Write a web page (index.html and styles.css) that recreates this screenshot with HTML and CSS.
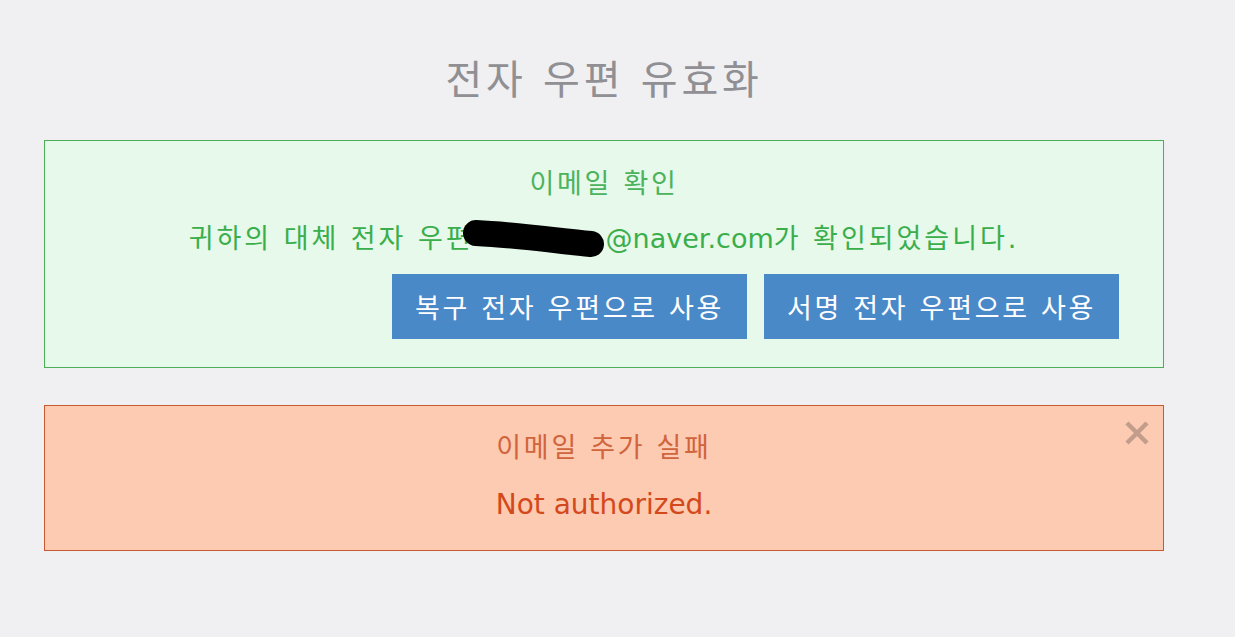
FILE: index.html
```html
<!DOCTYPE html>
<html lang="ko">
<head>
<meta charset="utf-8">
<title>전자 우편 유효화</title>
<link rel="stylesheet" href="styles.css">
</head>
<body>
<main class="page">
  <h1 class="page-title">전자 우편 유효화</h1>
  <section class="alert alert-success">
    <h2 class="alert-title">이메일 확인</h2>
    <p class="alert-text">귀하의 대체 전자 우편<svg class="redact" width="146" height="44" viewBox="0 0 146 44" aria-hidden="true"><path d="M16 17 C 58 19, 98 25, 131 28" fill="none" stroke="#000" stroke-width="26" stroke-linecap="round"/></svg><span class="latin">@naver.com</span>가 확인되었습니다.</p>
    <div class="actions">
      <button class="btn" type="button">복구 전자 우편으로 사용</button>
      <button class="btn" type="button">서명 전자 우편으로 사용</button>
    </div>
  </section>
  <section class="alert alert-error">
    <button class="close" type="button" aria-label="닫기"><svg width="26" height="26" viewBox="0 0 26 26"><path d="M3 3 L23 23 M23 3 L3 23" stroke="currentColor" stroke-width="4.5" stroke-linecap="butt"/></svg></button>
    <h2 class="alert-title">이메일 추가 실패</h2>
    <p class="alert-text latin">Not authorized.</p>
  </section>
</main>
</body>
</html>
```
FILE: styles.css
```css
* { box-sizing: border-box; }
html, body { margin: 0; padding: 0; }
body {
  background: #f0f0f2;
  font-family: "DejaVu Sans", "Noto Sans CJK KR", sans-serif;
  width: 1235px;
  height: 637px;
  overflow: hidden;
}
.page {
  padding: 52px 0 0 44px;
}
.page-title {
  margin: 0 0 32px;
  width: 1120px;
  text-align: center;
  font-size: 40px;
  line-height: 56px;
  font-weight: normal;
  letter-spacing: 0.095em;
  color: #8f8f94;
}
.alert {
  position: relative;
  width: 1120px;
  border: 1px solid;
  text-align: center;
}
.alert-success {
  background: #e6f9ea;
  border-color: #4caf57;
  padding: 25px 0 28px;
}
.alert-error {
  margin-top: 37px;
  background: #fdcab2;
  border-color: #c9592f;
  padding: 24px 0 27px;
}
.alert-title {
  margin: 0;
  font-size: 27px;
  line-height: 36px;
  font-weight: normal;
  letter-spacing: 0.1em;
}
.alert-text {
  margin: 19px 0 0;
  font-size: 27px;
  line-height: 36px;
  letter-spacing: 0.11em;
}
.latin { letter-spacing: 0; }
.alert-success .alert-title { color: #4cb35c; }
.alert-success .alert-text { color: #3aae4b; }
.alert-error .alert-title { color: #d0643d; }
.alert-error .alert-text { color: #d3491b; margin-top: 21px; font-size: 28px; }
.redact {
  vertical-align: middle;
  margin: -10px 0 -4px -14px;
}
.actions {
  display: flex;
  justify-content: flex-end;
  gap: 17px;
  padding-right: 44px;
  margin-top: 17px;
}
.btn {
  width: 355px;
  height: 65px;
  border: none;
  background: #4a89c8;
  color: #ffffff;
  font-family: "DejaVu Sans", "Noto Sans CJK KR", sans-serif;
  font-size: 27px;
  letter-spacing: 0.1em;
  padding: 0;
}
.close {
  position: absolute;
  top: 14px;
  right: 13px;
  border: none;
  background: none;
  padding: 0;
  width: 26px;
  height: 26px;
  color: #c29d8c;
}
.close svg { display: block; }
```
